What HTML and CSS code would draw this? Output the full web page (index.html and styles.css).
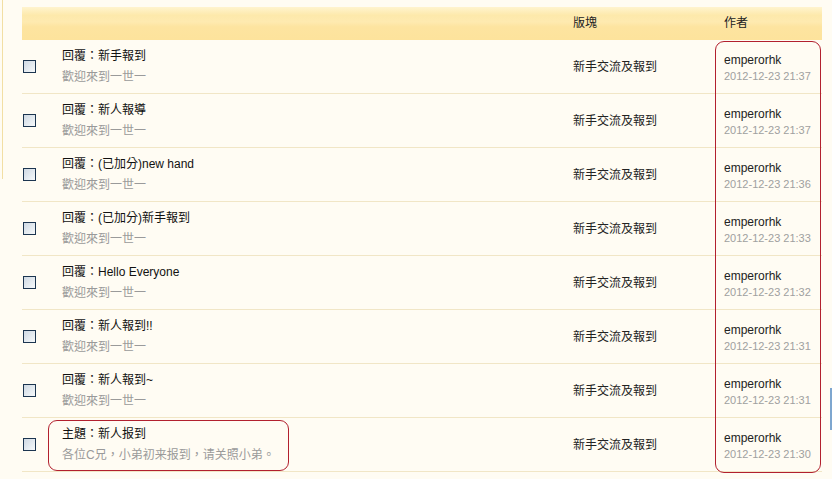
FILE: index.html
```html
<!DOCTYPE html>
<html>
<head>
<meta charset="utf-8">
<link rel="stylesheet" href="styles.css">
</head>
<body>
<div class="page">
  <div class="frame-edge"></div>
  <div class="scroll-edge"></div>
  <div class="list">
    <div class="head">
      <div></div>
      <div></div>
      <div class="hcell">版塊</div>
      <div class="hcell">作者</div>
    </div>

    <div class="row">
      <div class="chk"><span class="box"></span></div>
      <div class="topic"><div class="t">回覆：新手報到</div><div class="s">歡迎來到一世一</div></div>
      <div class="forum">新手交流及報到</div>
      <div class="author"><div class="n">emperorhk</div><div class="d">2012-12-23 21:37</div></div>
    </div>
    <div class="row">
      <div class="chk"><span class="box"></span></div>
      <div class="topic"><div class="t">回覆：新人報導</div><div class="s">歡迎來到一世一</div></div>
      <div class="forum">新手交流及報到</div>
      <div class="author"><div class="n">emperorhk</div><div class="d">2012-12-23 21:37</div></div>
    </div>
    <div class="row">
      <div class="chk"><span class="box"></span></div>
      <div class="topic"><div class="t">回覆：(已加分)new hand</div><div class="s">歡迎來到一世一</div></div>
      <div class="forum">新手交流及報到</div>
      <div class="author"><div class="n">emperorhk</div><div class="d">2012-12-23 21:36</div></div>
    </div>
    <div class="row">
      <div class="chk"><span class="box"></span></div>
      <div class="topic"><div class="t">回覆：(已加分)新手報到</div><div class="s">歡迎來到一世一</div></div>
      <div class="forum">新手交流及報到</div>
      <div class="author"><div class="n">emperorhk</div><div class="d">2012-12-23 21:33</div></div>
    </div>
    <div class="row">
      <div class="chk"><span class="box"></span></div>
      <div class="topic"><div class="t">回覆：Hello Everyone</div><div class="s">歡迎來到一世一</div></div>
      <div class="forum">新手交流及報到</div>
      <div class="author"><div class="n">emperorhk</div><div class="d">2012-12-23 21:32</div></div>
    </div>
    <div class="row">
      <div class="chk"><span class="box"></span></div>
      <div class="topic"><div class="t">回覆：新人報到!!</div><div class="s">歡迎來到一世一</div></div>
      <div class="forum">新手交流及報到</div>
      <div class="author"><div class="n">emperorhk</div><div class="d">2012-12-23 21:31</div></div>
    </div>
    <div class="row">
      <div class="chk"><span class="box"></span></div>
      <div class="topic"><div class="t">回覆：新人報到~</div><div class="s">歡迎來到一世一</div></div>
      <div class="forum">新手交流及報到</div>
      <div class="author"><div class="n">emperorhk</div><div class="d">2012-12-23 21:31</div></div>
    </div>
    <div class="row">
      <div class="chk"><span class="box"></span></div>
      <div class="topic"><div class="t">主題：新人报到</div><div class="s">各位C兄，小弟初来报到，请关照小弟。</div></div>
      <div class="forum">新手交流及報到</div>
      <div class="author"><div class="n">emperorhk</div><div class="d">2012-12-23 21:30</div></div>
    </div>

    <div class="mark mark-author"></div>
    <div class="mark mark-topic"></div>
  </div>
</div>
</body>
</html>
```

FILE: styles.css
```css
html, body {
  margin: 0;
  padding: 0;
  background: #fffcf3;
}
body {
  font-family: "Liberation Sans", "Noto Sans CJK TC", sans-serif;
  font-size: 12px;
  color: #1a1a1a;
  width: 832px;
  height: 479px;
  overflow: hidden;
}
.page {
  position: relative;
  width: 832px;
  height: 479px;
  padding-top: 7px;
  box-sizing: border-box;
}
.frame-edge {
  position: absolute;
  left: 2px;
  top: 0;
  width: 1px;
  height: 179px;
  background: #f2dfa4;
}
.scroll-edge {
  position: absolute;
  left: 830px;
  top: 388px;
  width: 2px;
  height: 42px;
  background: #7ea6cf;
}
.list {
  position: relative;
  margin-left: 22px;
  width: 800px;
}
.head, .row {
  display: grid;
  grid-template-columns: 40px 511px 151px 98px;
}
.head {
  height: 33px;
  background: linear-gradient(to bottom, #fff4cf 0%, #fde9ab 25%, #feeab0 45%, #fde4a0 60%, #fde39c 100%);
}
.hcell {
  line-height: 33px;
  color: #222;
}
.row {
  height: 54px;
  border-bottom: 1px solid #f1e6c6;
  box-sizing: border-box;
}
.chk {
  display: flex;
  align-items: center;
  padding-left: 1px;
}
.box {
  display: block;
  width: 11px;
  height: 11px;
  border: 1px solid #1c3550;
  background: linear-gradient(135deg, #cfd9e3 0%, #eaeff3 70%, #f7f9fb 100%);
}
.topic {
  padding-top: 6px;
}
.t {
  line-height: 20px;
  color: #111;
}
.s {
  line-height: 20px;
  margin-top: 1px;
  color: #9a9a9a;
}
.forum {
  display: flex;
  align-items: center;
  color: #222;
  padding-bottom: 2px;
}
.author {
  padding-top: 12px;
}
.n {
  line-height: 16px;
  color: #222;
}
.d {
  line-height: 16px;
  font-size: 11px;
  color: #a0a0a0;
}
.mark {
  position: absolute;
  border: 1px solid #b2202e;
  border-radius: 9px;
  box-sizing: border-box;
}
.mark-author {
  left: 693px;
  top: 34px;
  width: 106px;
  height: 432px;
}
.mark-topic {
  left: 26px;
  top: 413px;
  width: 241px;
  height: 51px;
}
```
